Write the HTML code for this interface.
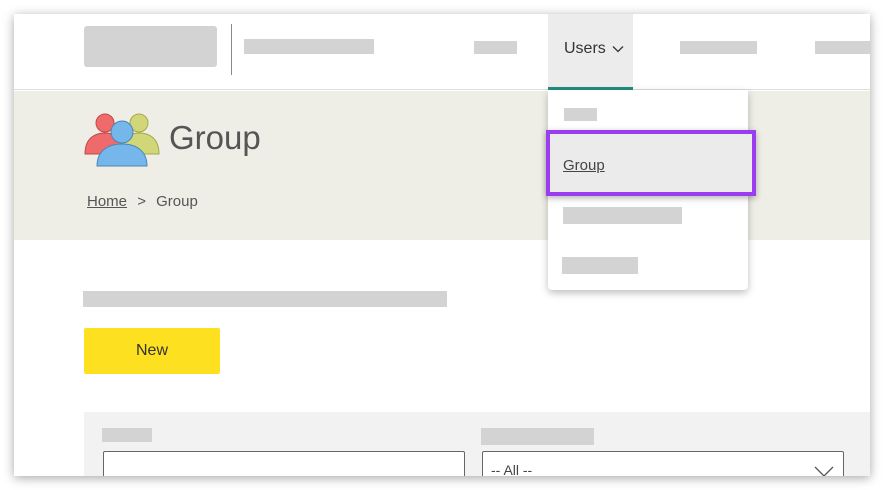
<!DOCTYPE html>
<html><head><style>
*{margin:0;padding:0;box-sizing:border-box}
body{width:884px;height:490px;background:#fff;position:relative;overflow:hidden;font-family:"Liberation Sans",sans-serif}
.frame{position:absolute;left:14px;top:14px;width:856px;height:462px;background:#fff;overflow:hidden;box-shadow:0 2px 10px rgba(0,0,0,.35)}
.g{position:absolute;background:#d3d3d3}
.a{position:absolute}
</style></head><body>
<div class="frame">
  <div class="a" style="left:0;top:0;width:856px;height:76px;background:#fff;border-bottom:1px solid #ddd"></div>
  <div class="g" style="left:70px;top:12px;width:133px;height:41px;border-radius:3px"></div>
  <div class="a" style="left:217px;top:10px;width:1px;height:51px;background:#888"></div>
  <div class="g" style="left:230px;top:25px;width:130px;height:15px"></div>
  <div class="g" style="left:460px;top:27px;width:43px;height:13px"></div>
  <div class="a" style="left:534px;top:0;width:85px;height:76px;background:#ececec;border-bottom:3px solid #1f8f7f"></div>
  <div class="a" style="left:550px;top:26px;font-size:16px;color:#333">Users <svg width="12" height="8" style="margin-left:2px" viewBox="0 0 12 8"><path d="M1 1.5 L6 6.5 L11 1.5" fill="none" stroke="#333" stroke-width="1.3"/></svg></div>
  <div class="g" style="left:666px;top:27px;width:77px;height:13px"></div>
  <div class="g" style="left:801px;top:27px;width:60px;height:13px"></div>
  <div class="a" style="left:0;top:77px;width:856px;height:149px;background:#efeee6"></div>
  <svg class="a" style="left:70px;top:98px" width="76" height="56" viewBox="0 0 76 56">
    <g stroke-width="1">
      <circle cx="21" cy="11" r="9" fill="#ef6a6a" stroke="#c04848"/>
      <path d="M1 42 C1 26 11 21 21 21 C31 21 41 26 41 42 Z" fill="#ef6a6a" stroke="#c04848"/>
      <circle cx="55" cy="11" r="9" fill="#d1d679" stroke="#a4a848"/>
      <path d="M35 42 C35 26 45 21 55 21 C65 21 75 26 75 42 Z" fill="#d1d679" stroke="#a4a848"/>
      <circle cx="38" cy="20" r="11" fill="#75b7ea" stroke="#4a86b8"/>
      <path d="M13 54 C13 38 25 32 38 32 C51 32 63 38 63 54 Z" fill="#75b7ea" stroke="#4a86b8"/>
    </g>
  </svg>
  <div class="a" style="left:155px;top:105px;font-size:33px;color:#555">Group</div>
  <div class="a" style="left:73px;top:179px;font-size:15px;color:#555"><span style="text-decoration:underline">Home</span> <span style="margin:0 6px;">&gt;</span> Group</div>
  <div class="g" style="left:69px;top:277px;width:364px;height:16px"></div>
  <div class="a" style="left:70px;top:314px;width:136px;height:46px;background:#fde020;border-radius:2px;color:#333;font-size:16px;text-align:center;line-height:46px">New</div>
  <div class="a" style="left:70px;top:398px;width:786px;height:70px;background:#f2f2f2"></div>
  <div class="g" style="left:88px;top:414px;width:50px;height:14px"></div>
  <div class="g" style="left:467px;top:414px;width:113px;height:17px"></div>
  <div class="a" style="left:89px;top:437px;width:362px;height:30px;background:#fff;border:1px solid #666;border-radius:2px"></div>
  <div class="a" style="left:468px;top:437px;width:362px;height:30px;background:#fff;border:1px solid #666;border-radius:2px;font-size:14px;color:#444;padding:10px 0 0 8px">-- All --</div>
  <svg class="a" style="left:800px;top:452px" width="20" height="12"><path d="M1 1 L10 10 L19 1" fill="none" stroke="#555" stroke-width="1.3"/></svg>
  <div class="a" style="left:534px;top:76px;width:200px;height:200px;background:#fff;border-radius:0 0 4px 4px;box-shadow:0 3px 8px rgba(0,0,0,.25)"></div>
  <div class="g" style="left:550px;top:94px;width:33px;height:13px"></div>
  <div class="a" style="left:532px;top:116px;width:210px;height:66px;border:4px solid #9b3cf0;background:#ebebeb;box-shadow:0 2px 6px rgba(0,0,0,.3)"></div>
  <div class="a" style="left:549px;top:143px;font-size:15px;color:#444;text-decoration:underline">Group</div>
  <div class="g" style="left:549px;top:193px;width:119px;height:17px"></div>
  <div class="g" style="left:548px;top:243px;width:76px;height:17px"></div>
</div>
</body></html>
